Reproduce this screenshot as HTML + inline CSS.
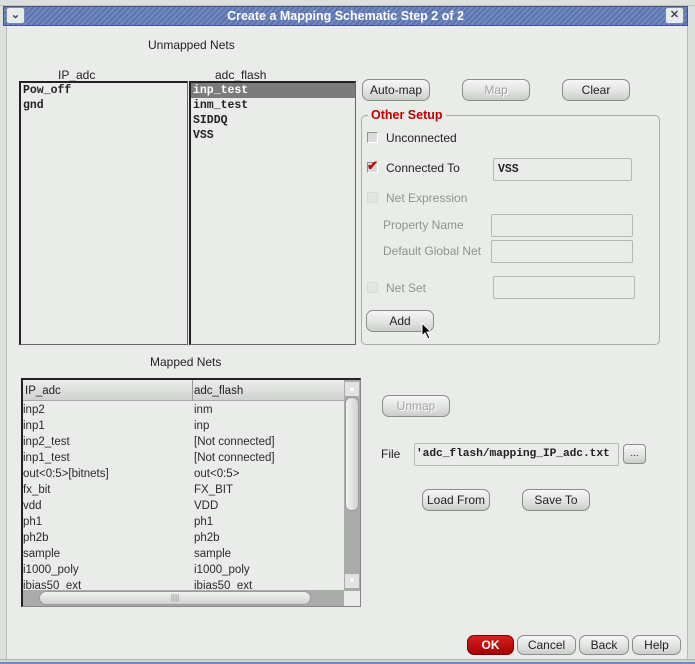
<!DOCTYPE html>
<html><head><meta charset="utf-8"><style>
*{box-sizing:border-box;margin:0;padding:0}
body{width:695px;height:664px;overflow:hidden;background:#e9ece9;font-family:"Liberation Sans",sans-serif;font-size:12px;color:#222;position:relative}
.a{position:absolute}
.frameL{left:0;top:0;width:7px;height:664px;background:#dcdfdc;border-right:1px solid #b8bbb8}
.frameR{left:687px;top:0;width:8px;height:664px;background:#dcdfdc;border-left:1px solid #b8bbb8}
.frameT{left:0;top:0;width:695px;height:6px;background:#dcdfdc;border-bottom:1px solid #c0c3c0}
.frameB{left:0;top:659px;width:695px;height:5px;background:#d0d3d0;border-top:1px solid #b0b3b0}
.blue{left:0;top:662px;width:695px;height:2px;background:#6f8cc8}
.title{left:3px;top:6px;width:685px;height:20px;background:repeating-linear-gradient(135deg,#5a74ac 0 2px,#7189c0 2px 4px);border:1px solid #3e5590;color:#fff;font-weight:bold;font-size:12.5px;text-align:center;line-height:18px}
.tb{width:19px;height:17px;background:#e8ebee;border:1px solid #7c8aa6;border-radius:3px;color:#445;font-size:11px;text-align:center;line-height:14px;font-weight:bold}
.btn{height:22px;border:1px solid #8a8d8a;border-radius:7px;background:linear-gradient(#f6f7f6,#dfe2df 60%,#c9ccc9);text-align:center;line-height:20px;font-size:12px;color:#222}
.dis{color:#a0a3a0;text-shadow:1px 1px 0 #fff}
.list{background:#e9ece9;border-top:2px solid #222;border-left:2px solid #222;border-right:1px solid #666;border-bottom:1px solid #666;font-family:"Liberation Mono",monospace;font-weight:bold;font-size:11.5px;line-height:15px;color:#222}
.list div{padding-left:2px;height:15px}
.sel{background:#7b7b7b;color:#fff}
.in{border:1px solid #b4b7b4;border-radius:2px;background:#e9ece9}
.cb{width:11px;height:11px;background:#d8dbd8;border:1px solid #909390;border-right-color:#fff;border-bottom-color:#fff}
.lab{font-size:12px}
.g{color:#909390}
table{border-collapse:collapse}
.row{position:absolute;left:2px;font-size:11.5px;height:16px;line-height:16px}
</style></head><body>
<div class="a frameL"></div><div class="a frameR"></div><div class="a frameT"></div><div class="a frameB"></div><div class="a blue"></div>
<div class="a title">Create a Mapping Schematic Step 2 of 2</div>
<div class="a tb" style="left:6px;top:7px">&#8964;</div>
<div class="a tb" style="left:665px;top:7px">✕</div>

<div class="a lab" style="left:148px;top:38px">Unmapped Nets</div>
<div class="a lab" style="left:58px;top:68px">IP_adc</div>
<div class="a lab" style="left:215px;top:68px">adc_flash</div>
<div class="a list" style="left:19px;top:81px;width:169px;height:264px"><div>Pow_off</div><div>gnd</div></div>
<div class="a list" style="left:189px;top:81px;width:167px;height:264px"><div class="sel">inp_test</div><div>inm_test</div><div>SIDDQ</div><div>VSS</div></div>

<div class="a btn" style="left:362px;top:79px;width:68px">Auto-map</div>
<div class="a btn dis" style="left:462px;top:79px;width:68px">Map</div>
<div class="a btn" style="left:562px;top:79px;width:68px">Clear</div>

<div class="a" style="left:361px;top:115px;width:299px;height:230px;border:1px solid #a8aba8;border-radius:5px"></div>
<div class="a" style="left:368px;top:108px;background:#e9ece9;padding:0 3px;color:#c00000;font-weight:bold;font-size:12.5px">Other Setup</div>
<div class="a cb" style="left:367px;top:132px"></div><div class="a lab" style="left:386px;top:131px">Unconnected</div>
<div class="a cb" style="left:367px;top:162px"></div><div class="a" style="left:367px;top:158px;color:#c00;font-size:13px;font-weight:bold">✔</div>
<div class="a lab" style="left:386px;top:161px">Connected To</div>
<div class="a in" style="left:493px;top:158px;width:139px;height:23px;font-family:'Liberation Mono',monospace;font-weight:bold;font-size:11.5px;line-height:21px;padding-left:4px">VSS</div>
<div class="a cb" style="left:367px;top:192px;border-color:#d8dbd8;background:#e2e5e2"></div><div class="a lab g" style="left:386px;top:191px">Net Expression</div>
<div class="a lab g" style="left:383px;top:218px">Property Name</div>
<div class="a in" style="left:491px;top:214px;width:142px;height:23px"></div>
<div class="a lab g" style="left:383px;top:244px">Default Global Net</div>
<div class="a in" style="left:491px;top:240px;width:142px;height:23px"></div>
<div class="a cb" style="left:367px;top:282px;border-color:#d8dbd8;background:#e2e5e2"></div><div class="a lab g" style="left:386px;top:281px">Net Set</div>
<div class="a in" style="left:493px;top:276px;width:142px;height:23px"></div>
<div class="a btn" style="left:366px;top:310px;width:68px">Add</div>
<svg class="a" style="left:421px;top:322px" width="12" height="18"><path d="M1 1 L1 14 L4 11 L7 17 L9 16 L6 10 L10 10 Z" fill="#000" stroke="#fff" stroke-width="1"/></svg>

<div class="a lab" style="left:150px;top:355px">Mapped Nets</div>
<div class="a" style="left:21px;top:378px;width:340px;height:229px;border-top:2px solid #222;border-left:2px solid #222;border-right:1px solid #888;border-bottom:1px solid #888;background:#e9ece9;overflow:hidden">
 <div class="a" style="left:0;top:0;width:321px;height:21px;background:linear-gradient(#eceeec,#cfd2cf);border-bottom:1px solid #aaa"></div>
 <div class="a" style="left:169px;top:0;width:1px;height:21px;background:#999"></div>
 <div class="row" style="top:3px">IP_adc</div><div class="row" style="top:3px;left:171px">adc_flash</div>
 <div class="a" style="left:321px;top:0;width:16px;height:211px;background:#a9aca9"></div>
 <div class="a" style="left:322px;top:2px;width:14px;height:14px;background:#e0e3e0;font-size:8px;text-align:center;color:#fff;line-height:14px">▲</div>
 <div class="a" style="left:322px;top:17px;width:14px;height:114px;background:linear-gradient(90deg,#f0f2f0,#cfd2cf);border-radius:6px;border:1px solid #999"></div>
 <div class="a" style="left:322px;top:194px;width:14px;height:14px;background:#e0e3e0;font-size:8px;text-align:center;color:#fff;line-height:14px">▼</div>
 <div class="a" style="left:0;top:210px;width:321px;height:17px;background:#a9aca9"></div>
 <div class="a" style="left:16px;top:211px;width:272px;height:14px;background:linear-gradient(#f0f2f0,#cfd2cf);border-radius:7px;border:1px solid #999;font-size:8px;text-align:center;color:#888;line-height:12px">||||</div>
</div>
<div class="a" style="left:23px;top:402px;width:320px;height:187px;overflow:hidden">
<table style="font-size:11.5px;line-height:16px;color:#2a2a2a"><tbody>
<tr><td style="width:171px">inp2</td><td>inm</td></tr>
<tr><td>inp1</td><td>inp</td></tr>
<tr><td>inp2_test</td><td>[Not connected]</td></tr>
<tr><td>inp1_test</td><td>[Not connected]</td></tr>
<tr><td>out&lt;0:5&gt;[bitnets]</td><td>out&lt;0:5&gt;</td></tr>
<tr><td>fx_bit</td><td>FX_BIT</td></tr>
<tr><td>vdd</td><td>VDD</td></tr>
<tr><td>ph1</td><td>ph1</td></tr>
<tr><td>ph2b</td><td>ph2b</td></tr>
<tr><td>sample</td><td>sample</td></tr>
<tr><td>i1000_poly</td><td>i1000_poly</td></tr>
<tr><td>ibias50_ext</td><td>ibias50_ext</td></tr>
</tbody></table></div>

<div class="a btn dis" style="left:382px;top:395px;width:68px">Unmap</div>
<div class="a lab" style="left:381px;top:447px">File</div>
<div class="a in" style="left:414px;top:443px;width:205px;height:23px;font-family:'Liberation Mono',monospace;font-weight:bold;font-size:11.3px;line-height:21px;padding-left:1px;white-space:nowrap;overflow:hidden;letter-spacing:-0.1px">'adc_flash/mapping_IP_adc.txt</div>
<div class="a btn" style="left:623px;top:444px;width:23px;height:20px;border-radius:4px;line-height:18px;font-size:10px">...</div>
<div class="a btn" style="left:422px;top:489px;width:68px">Load From</div>
<div class="a btn" style="left:522px;top:489px;width:68px">Save To</div>

<div class="a btn" style="left:467px;top:635px;width:47px;height:20px;line-height:18px;background:linear-gradient(#d82020,#a80000);color:#fff;font-weight:bold;border-color:#700">OK</div>
<div class="a btn" style="left:517px;top:635px;width:59px;height:20px;line-height:18px">Cancel</div>
<div class="a btn" style="left:579px;top:635px;width:50px;height:20px;line-height:18px">Back</div>
<div class="a btn" style="left:632px;top:635px;width:49px;height:20px;line-height:18px">Help</div>
</body></html>
